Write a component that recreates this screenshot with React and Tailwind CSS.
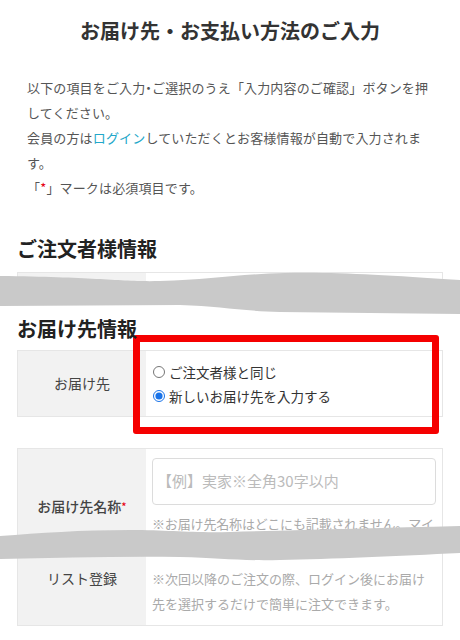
import React from 'react';

const Radio = ({ checked, label }) => (
  <label className="flex items-center gap-[4px] leading-[24px]">
    <input
      type="radio"
      name="dest"
      defaultChecked={checked}
      className="m-0 h-[12px] w-[12px] shrink-0 accent-[#1a73e8]"
    />
    <span>{label}</span>
  </label>
);

export default function App() {
  return (
    <div className="relative h-[640px] w-[460px] overflow-hidden bg-white font-['Noto_Sans_CJK_JP','Noto_Sans',sans-serif]">
      <h1 className="pt-[17px] text-center text-[20px] font-bold leading-[28px] text-[#333]">
        お届け先・お支払い方法のご入力
      </h1>

      <p className="mt-[30px] whitespace-nowrap px-[27px] text-[13px] leading-[25px] tracking-[0.15px] text-[#555]">
        以下の項目をご入力<span className="[font-feature-settings:'halt']">・</span>ご選択のうえ「入力内容のご確認」ボタンを押
        <br />
        してください。
        <br />
        会員の方は<span className="text-[#22a7c9]">ログイン</span>していただくとお客様情報が自動で入力されま
        <br />
        す。
        <br />
        「<span className="text-[#e60012]">*</span>」マークは必須項目です。
      </p>

      <h2 className="mt-[35px] px-[17px] text-[20px] font-bold leading-[28px] text-[#222]">
        ご注文者様情報
      </h2>
      <div className="mx-[17px] mt-[9px] flex h-[20px] border border-[#e6e6e6]">
        <div className="w-[128px] bg-[#f2f2f2]" />
        <div className="flex-1 bg-white" />
      </div>

      <h2 className="relative z-10 mt-[23px] px-[17px] text-[20px] font-bold leading-[28px] text-[#222]">
        お届け先情報
      </h2>

      {/* お届け先 */}
      <div className="mx-[17px] mt-[7px] flex h-[67px] border border-[#e6e6e6]">
        <div className="flex w-[128px] items-center justify-center bg-[#f2f2f2] text-[14px] text-[#444]">
          お届け先
        </div>
        <div className="flex flex-1 flex-col justify-center px-[7px] text-[13.5px] text-[#333]">
          <Radio label="ご注文者様と同じ" />
          <Radio checked label="新しいお届け先を入力する" />
        </div>
      </div>

      {/* お届け先名称 / リスト登録 */}
      <div className="mx-[17px] mt-[31px] border border-[#e6e6e6]">
        <div className="flex h-[112px]">
          <div className="flex w-[128px] items-center justify-center bg-[#f2f2f2] pt-[3px] text-[14px] font-medium text-[#444]">
            お届け先名称<span className="text-[11px] text-[#e60012]">*</span>
          </div>
          <div className="min-w-0 flex-1 overflow-hidden px-[6px] pt-[9px]">
            <div className="flex h-[47px] items-center rounded-[4px] border border-[#dcdcdc] px-[4px] text-[15px] text-[#bbb]">
              【例】実家※全角30字以内
            </div>
            <p className="mt-[8px] whitespace-nowrap text-[13px] leading-[22px] tracking-[-0.15px] text-[#aaa]">
              ※お届け先名称はどこにも記載されません。マイ
              <br />
              ページでの管理用です。
            </p>
          </div>
        </div>
        <div className="flex h-[64px]">
          <div className="w-[128px] bg-[#f2f2f2] pt-[6px] text-center text-[14px] leading-[22px] text-[#444]">
            リスト登録
          </div>
          <div className="flex-1 px-[6px] pt-[5px] text-[13px] leading-[25px] text-[#aaa]">
            ※次回以降のご注文の際、ログイン後にお届け
            <br />
            先を選択するだけで簡単に注文できます。
          </div>
        </div>
      </div>

      {/* 省略の波線 */}
      <svg
        className="pointer-events-none absolute left-0 top-0 z-20"
        width="460"
        height="640"
        viewBox="0 0 460 640"
      >
        <path
          fill="#c9c9c9"
          d="M0,276 C100,277 120,282 160,281 C210,280 240,274 285,273 C340,272 380,275 460,280 L460,314 C400,313 340,313 280,312 C240,311 220,306 180,305 C120,305 60,306 0,306 Z"
        />
        <path
          fill="#c9c9c9"
          d="M0,536 C40,533 80,530 130,530 C170,530 190,533 230,532 C300,530 380,528 460,526 L460,553 C400,556 330,559 280,560 C240,561 220,558 180,557 C120,556 60,558 0,559 Z"
        />
      </svg>

      {/* 注目枠 */}
      <div className="pointer-events-none absolute left-[133px] top-[335px] h-[99px] w-[306px] rounded-[3px] border-[7px] border-[#f50000]" />
    </div>
  );
}
